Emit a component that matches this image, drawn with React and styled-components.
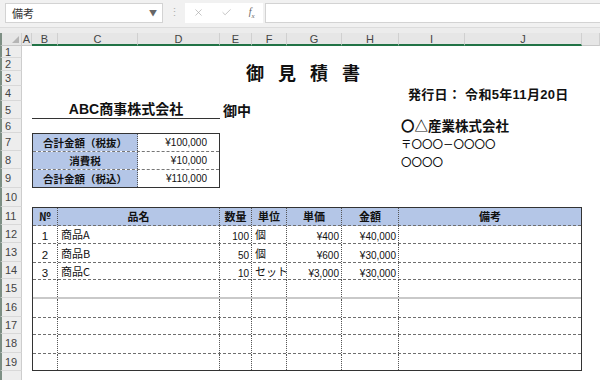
import React from 'react';
import styled, { createGlobalStyle } from 'styled-components';
import { X, Check } from 'lucide-react';

const GlobalStyle = createGlobalStyle`
  html, body {
    margin: 0;
    padding: 0;
  }
  body {
    width: 600px;
    height: 380px;
    overflow: hidden;
    background: #ececec;
    font-family: "Liberation Sans", "Noto Sans CJK JP", sans-serif;
    color: #111;
  }
`;

const JP = '"Noto Sans CJK JP", "Liberation Sans", sans-serif';

// column widths in px (A..J), then the sheet rows 1..20
const COLS = [
  ['A', 10], ['B', 26], ['C', 80], ['D', 82], ['E', 32],
  ['F', 35], ['G', 55], ['H', 57], ['I', 66], ['J', 117],
];
const ROWS = [12, 13, 15, 15, 18, 14, 18, 18, 19, 19, 18, 18, 19, 17, 19, 19, 17, 19, 18, 18];

const Window = styled.div`
  width: 600px;
  height: 380px;
  display: flex;
  flex-direction: column;
  overflow: hidden;
`;

const TopBar = styled.div`
  flex: none;
  height: 28px;
  box-sizing: border-box;
  display: flex;
  align-items: center;
  padding: 0 0 2px 5px;
  background: #f1f1f1;
  border-bottom: 1px solid #dcdcdc;
`;

const NameBox = styled.div`
  width: 158px;
  height: 20px;
  box-sizing: border-box;
  display: flex;
  align-items: center;
  justify-content: space-between;
  padding: 0 5px 0 6px;
  background: #fff;
  border: 1px solid #d3d3d3;
  font: 11px ${JP};
  color: #333;
`;

const Caret = styled.span`
  font-size: 8px;
  color: #666;
`;

const Grip = styled.div`
  width: 22px;
  text-align: center;
  font-size: 11px;
  color: #b0b0b0;
`;

const FxGroup = styled.div`
  width: 78px;
  height: 20px;
  display: flex;
  align-items: center;
  justify-content: space-around;
  background: #fff;
  color: #a6a6a6;
`;

const FxLabel = styled.span`
  font: italic 10px "Liberation Serif", serif;
  color: #666;
  sub {
    font-size: 7px;
  }
`;

const FormulaInput = styled.div`
  flex: 1;
  height: 20px;
  margin-left: 2px;
  box-sizing: border-box;
  background: #fff;
  border: 1px solid #d3d3d3;
  border-right: none;
`;

const Sheet = styled.div`
  flex: 1;
  margin-top: 5px;
  display: grid;
  grid-template-columns: 22px ${COLS.map(c => c[1] + 'px').join(' ')} 1fr;
  grid-template-rows: 13px ${ROWS.map(r => r + 'px').join(' ')};
  background: #fff;
  overflow: hidden;
`;

const Corner = styled.div`
  grid-row: 1;
  grid-column: 1;
  background: #e6e6e6;
  border-right: 1px solid #cfcfcf;
  border-bottom: 1px solid #c8c8c8;
  border-left: 2px solid #7d8f84;
  display: flex;
  align-items: flex-end;
  justify-content: flex-end;
  padding: 0 2px 2px 0;
`;

const ColHead = styled.div`
  grid-row: 1;
  box-sizing: border-box;
  display: flex;
  align-items: center;
  justify-content: center;
  background: #e6e6e6;
  border-right: 1px solid #d0d0d0;
  border-bottom: ${p => (p.$selected ? '2px solid #217346' : '1px solid #c8c8c8')};
  font-size: 11px;
  color: #444;
`;

const RowHead = styled.div`
  grid-column: 1;
  grid-row: ${p => p.$row + 1};
  box-sizing: border-box;
  display: flex;
  align-items: center;
  padding-left: 3px;
  background: #ededed;
  border-left: 2px solid #7d8f84;
  border-right: 1px solid #cdcdcd;
  border-bottom: 1px solid #d8d8d8;
  font-size: 11px;
  color: #444;
`;

const Title = styled.div`
  grid-row: 3 / 5;
  grid-column: 2 / 12;
  display: flex;
  align-items: center;
  justify-content: center;
  padding-left: 16px;
  font: bold 18px ${JP};
  letter-spacing: 14px;
`;

const IssueDate = styled.div`
  grid-row: 5;
  grid-column: 10 / 12;
  display: flex;
  align-items: center;
  padding-left: 9px;
  font-size: 13px;
  font-weight: bold;
  letter-spacing: 0.3px;
  white-space: nowrap;
`;

const Customer = styled.div`
  grid-row: 6;
  grid-column: 3 / 6;
  display: flex;
  align-items: flex-end;
  justify-content: center;
  border-bottom: 1px solid #333;
  font-size: 14px;
  font-weight: bold;
  line-height: 17px;
`;

const Honorific = styled.div`
  grid-row: 6;
  grid-column: 6 / 8;
  display: flex;
  align-items: flex-end;
  padding-left: 3px;
  font: bold 14px ${JP};
  line-height: 18px;
`;

const IssuerLine = styled.div`
  grid-row: ${p => p.$row + 1};
  grid-column: 10 / 12;
  display: flex;
  align-items: flex-end;
  padding-left: 2px;
  font: ${p => (p.$bold ? 'bold 13.5px' : '500 10.5px')} ${JP};
  line-height: ${p => (p.$bold ? '16px' : '15px')};
  white-space: nowrap;
`;

const Summary = styled.div`
  grid-row: 8 / 11;
  grid-column: 3 / 6;
  display: flex;
  flex-direction: column;
  box-sizing: border-box;
  border: 1px solid #333;
`;

const SummaryRow = styled.div`
  flex: 1;
  display: grid;
  grid-template-columns: 105px 1fr;
  border-bottom: ${p => (p.$last ? 'none' : '1px dashed #777')};
`;

const SummaryLabel = styled.div`
  display: flex;
  align-items: center;
  justify-content: center;
  background: #b4c6e7;
  border-right: 1px dotted #555;
  font: bold 10.5px ${JP};
`;

const SummaryValue = styled.div`
  display: flex;
  align-items: center;
  justify-content: flex-end;
  padding-right: 12px;
  font-size: 10px;
`;

const Items = styled.div`
  grid-row: 12 / 21;
  grid-column: 3 / 12;
  display: flex;
  flex-direction: column;
  box-sizing: border-box;
  border: 1px solid #333;
`;

const ItemRow = styled.div`
  flex: ${p => (p.$last ? 1 : 'none')};
  height: ${p => p.$h}px;
  box-sizing: border-box;
  display: grid;
  grid-template-columns: 25px 162px 32px 35px 55px 57px 1fr;
  background: ${p => (p.$head ? '#b4c6e7' : '#fff')};
  border-bottom: ${p =>
    p.$last ? 'none' : p.$break ? '2px solid #c9c9c9' : '1px dashed #6e6e6e'};
  font-weight: ${p => (p.$head ? 'bold' : 'normal')};
`;

const ItemCell = styled.div`
  display: flex;
  align-items: ${p => (p.$head ? 'center' : 'flex-end')};
  justify-content: ${p =>
    p.$align === 'right' ? 'flex-end' : p.$align === 'left' ? 'flex-start' : 'center'};
  padding: 0 ${p => (p.$align === 'right' ? 2 : 0)}px 1px ${p => (p.$align === 'left' ? 3 : 0)}px;
  border-right: ${p => (p.$end ? 'none' : '1px dotted #555')};
  font-size: ${p => p.$size || 11}px;
  font-family: ${p => (p.$jp ? JP : 'inherit')};
  white-space: nowrap;
`;

const HEAD = ['№', '品名', '数量', '単位', '単価', '金額', '備考'];

const ITEMS = [
  { no: '1', name: '商品A', qty: '100', unit: '個', price: '¥400', amount: '¥40,000' },
  { no: '2', name: '商品B', qty: '50', unit: '個', price: '¥600', amount: '¥30,000' },
  { no: '3', name: '商品C', qty: '10', unit: 'セット', price: '¥3,000', amount: '¥30,000' },
];

// heights of sheet rows 12..19 inside the item table
const BODY_HEIGHTS = [18, 19, 17, 19, 19, 17, 19, 18];

const SUMMARY = [
  ['合計金額（税抜）', '¥100,000'],
  ['消費税', '¥10,000'],
  ['合計金額（税込）', '¥110,000'],
];

function ItemLine({ item, h, last, brk }) {
  const it = item || {};
  return (
    <ItemRow $h={h} $last={last} $break={brk}>
      <ItemCell $size={11.5}>{it.no}</ItemCell>
      <ItemCell $align="left" $jp>{it.name}</ItemCell>
      <ItemCell $align="right" $size={10}>{it.qty}</ItemCell>
      <ItemCell $align="left" $jp>{it.unit}</ItemCell>
      <ItemCell $align="right" $size={10}>{it.price}</ItemCell>
      <ItemCell $align="right" $size={10}>{it.amount}</ItemCell>
      <ItemCell $end />
    </ItemRow>
  );
}

export default function App() {
  return (
    <Window>
      <GlobalStyle />
      <TopBar>
        <NameBox>
          備考
          <Caret>▼</Caret>
        </NameBox>
        <Grip>⋮</Grip>
        <FxGroup>
          <X size={11} strokeWidth={1.4} />
          <Check size={11} strokeWidth={1.4} />
          <FxLabel>f<sub>x</sub></FxLabel>
        </FxGroup>
        <FormulaInput />
      </TopBar>

      <Sheet>
        <Corner>
          <svg width="7" height="7" viewBox="0 0 7 7">
            <polygon points="7,0 7,7 0,7" fill="#b5b5b5" />
          </svg>
        </Corner>
        {COLS.map(([name]) => (
          <ColHead key={name} $selected={name !== 'A'}>{name}</ColHead>
        ))}
        <ColHead />

        {ROWS.map((_, i) => (
          <RowHead key={i} $row={i + 1}>{i < 19 ? i + 1 : ''}</RowHead>
        ))}

        <Title>御見積書</Title>
        <IssueDate>発行日： 令和5年11月20日</IssueDate>

        <Customer>ABC商事株式会社</Customer>
        <Honorific>御中</Honorific>

        <IssuerLine $row={6} $bold>〇△産業株式会社</IssuerLine>
        <IssuerLine $row={7}>〒〇〇〇－〇〇〇〇</IssuerLine>
        <IssuerLine $row={8}>〇〇〇〇</IssuerLine>

        <Summary>
          {SUMMARY.map(([label, value], i) => (
            <SummaryRow key={label} $last={i === SUMMARY.length - 1}>
              <SummaryLabel>{label}</SummaryLabel>
              <SummaryValue>{value}</SummaryValue>
            </SummaryRow>
          ))}
        </Summary>

        <Items>
          <ItemRow $h={18} $head>
            {HEAD.map((h, i) => (
              <ItemCell key={h} $head $jp $end={i === HEAD.length - 1}>{h}</ItemCell>
            ))}
          </ItemRow>
          {BODY_HEIGHTS.map((h, i) => (
            <ItemLine
              key={i}
              item={ITEMS[i]}
              h={h}
              brk={i === 3}
              last={i === BODY_HEIGHTS.length - 1}
            />
          ))}
        </Items>
      </Sheet>
    </Window>
  );
}
